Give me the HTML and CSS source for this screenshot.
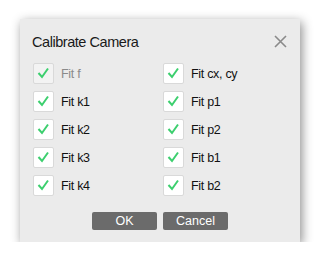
FILE: index.html
```html
<!DOCTYPE html>
<html lang="en">

<head>
    <meta charset="UTF-8">
    <title>Calibrate Camera</title>
    <link rel="stylesheet" href="styles.css">
</head>

<body>
    <div class="dialog">
        <div class="dialog-header">
            <div class="dialog-title">Calibrate Camera</div>
            <button class="close-button" aria-label="Close">
                <svg width="13" height="13" viewBox="0 0 13 13">
                    <path d="M1 1 L12 12 M12 1 L1 12" stroke="#8a8a8a" stroke-width="1.6" fill="none" />
                </svg>
            </button>
        </div>

        <div class="options">
            <label class="option disabled">
                <span class="check"><svg width="19" height="19" viewBox="0 0 19 19"><path d="M4.5 9 L8 13 L14 4.5" /></svg></span>
                <span class="option-label">Fit f</span>
            </label>
            <label class="option">
                <span class="check"><svg width="19" height="19" viewBox="0 0 19 19"><path d="M4.5 9 L8 13 L14 4.5" /></svg></span>
                <span class="option-label">Fit cx, cy</span>
            </label>
            <label class="option">
                <span class="check"><svg width="19" height="19" viewBox="0 0 19 19"><path d="M4.5 9 L8 13 L14 4.5" /></svg></span>
                <span class="option-label">Fit k1</span>
            </label>
            <label class="option">
                <span class="check"><svg width="19" height="19" viewBox="0 0 19 19"><path d="M4.5 9 L8 13 L14 4.5" /></svg></span>
                <span class="option-label">Fit p1</span>
            </label>
            <label class="option">
                <span class="check"><svg width="19" height="19" viewBox="0 0 19 19"><path d="M4.5 9 L8 13 L14 4.5" /></svg></span>
                <span class="option-label">Fit k2</span>
            </label>
            <label class="option">
                <span class="check"><svg width="19" height="19" viewBox="0 0 19 19"><path d="M4.5 9 L8 13 L14 4.5" /></svg></span>
                <span class="option-label">Fit p2</span>
            </label>
            <label class="option">
                <span class="check"><svg width="19" height="19" viewBox="0 0 19 19"><path d="M4.5 9 L8 13 L14 4.5" /></svg></span>
                <span class="option-label">Fit k3</span>
            </label>
            <label class="option">
                <span class="check"><svg width="19" height="19" viewBox="0 0 19 19"><path d="M4.5 9 L8 13 L14 4.5" /></svg></span>
                <span class="option-label">Fit b1</span>
            </label>
            <label class="option">
                <span class="check"><svg width="19" height="19" viewBox="0 0 19 19"><path d="M4.5 9 L8 13 L14 4.5" /></svg></span>
                <span class="option-label">Fit k4</span>
            </label>
            <label class="option">
                <span class="check"><svg width="19" height="19" viewBox="0 0 19 19"><path d="M4.5 9 L8 13 L14 4.5" /></svg></span>
                <span class="option-label">Fit b2</span>
            </label>
        </div>

        <div class="dialog-buttons">
            <button class="dialog-button">OK</button>
            <button class="dialog-button">Cancel</button>
        </div>
    </div>
</body>

</html>
```

FILE: styles.css
```css
body,
html {
    margin: 0;
    padding: 0;
    background-color: #ffffff;
    font-family: "Liberation Sans", Arial, sans-serif;
}

.dialog {
    box-sizing: border-box;
    width: 280px;
    height: 223px;
    margin: 19px 0 0 20px;
    padding: 0 13px;
    background-color: #ebebeb;
    box-shadow: 2px 3px 10px rgba(0, 0, 0, 0.45);
}

.dialog-header {
    display: flex;
    justify-content: space-between;
    align-items: center;
    height: 44px;
    padding-top: 1px;
    box-sizing: border-box;
}

.dialog-title {
    font-size: 14.5px;
    letter-spacing: -0.45px;
    color: #1a1a1a;
    margin-left: -1px;
}

.close-button {
    background: none;
    border: none;
    padding: 0;
    width: 13px;
    height: 13px;
    display: flex;
    cursor: pointer;
}

.options {
    display: grid;
    grid-template-columns: 130px 130px;
    row-gap: 7px;
}

.option {
    display: flex;
    align-items: center;
    gap: 7px;
    font-size: 12.5px;
    letter-spacing: -0.3px;
    color: #111111;
}

.check {
    box-sizing: border-box;
    width: 21px;
    height: 21px;
    background-color: #ffffff;
    border: 1px solid #d9d9d9;
    border-radius: 2px;
    display: flex;
}

.check svg path {
    fill: none;
    stroke: #3ccf6e;
    stroke-width: 2;
}

.option.disabled .check {
    background-color: #f3f3f3;
}

.option.disabled .option-label {
    color: #8a8a8a;
}

.dialog-buttons {
    display: flex;
    justify-content: center;
    gap: 6px;
    margin-top: 16px;
}

.dialog-button {
    width: 65px;
    height: 18px;
    padding: 0;
    border: none;
    border-radius: 2px;
    background-color: #6b6b6b;
    color: #ffffff;
    font-family: "Liberation Sans", Arial, sans-serif;
    font-size: 12.5px;
    cursor: pointer;
}
```
